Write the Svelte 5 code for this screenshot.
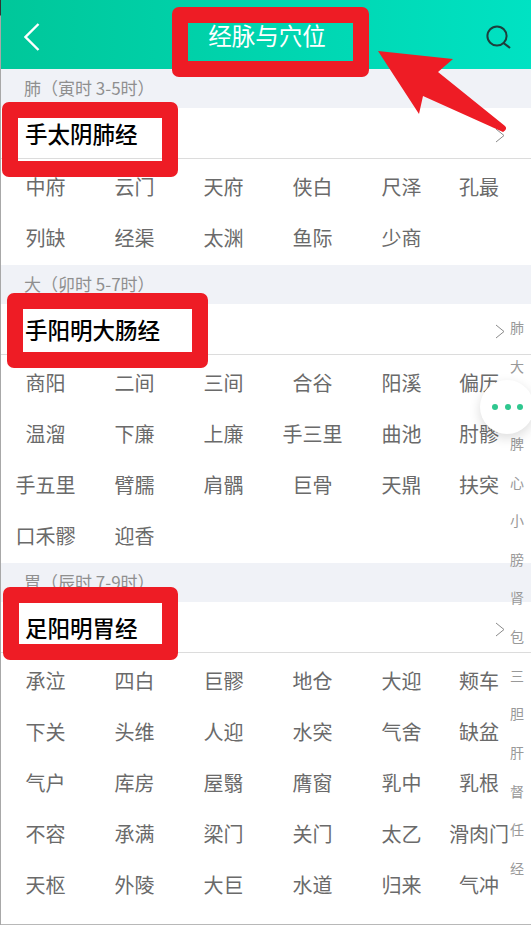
<script>
  const sections = [
    {
      label: "肺（寅时 3-5时）",
      title: "手太阴肺经",
      points: ["中府", "云门", "天府", "侠白", "尺泽", "孔最", "列缺", "经渠", "太渊", "鱼际", "少商"],
    },
    {
      label: "大（卯时 5-7时）",
      title: "手阳明大肠经",
      points: ["商阳", "二间", "三间", "合谷", "阳溪", "偏历", "温溜", "下廉", "上廉", "手三里", "曲池", "肘髎", "手五里", "臂臑", "肩髃", "巨骨", "天鼎", "扶突", "口禾髎", "迎香"],
    },
    {
      label: "胃（辰时 7-9时）",
      title: "足阳明胃经",
      points: ["承泣", "四白", "巨髎", "地仓", "大迎", "颊车", "下关", "头维", "人迎", "水突", "气舍", "缺盆", "气户", "库房", "屋翳", "膺窗", "乳中", "乳根", "不容", "承满", "梁门", "关门", "太乙", "滑肉门", "天枢", "外陵", "大巨", "水道", "归来", "气冲"],
    },
  ];
  const letters = ["肺", "大", "胃", "脾", "心", "小", "膀", "肾", "包", "三", "胆", "肝", "督", "任", "经"];
  // red markup boxes drawn on top of the screenshot
  const marks = ["one", "two", "three", "four"];
</script>

<div class="page">
  <header class="top">
    <svg class="back" width="16" height="28" viewBox="0 0 16 28">
      <path d="M14.5 1 L1.5 14 L14.5 27" fill="none" stroke="#fff" stroke-width="2.4" />
    </svg>
    <span class="heading">经脉与穴位</span>
    <svg class="search" width="26" height="24" viewBox="0 0 26 24">
      <circle cx="11" cy="11" r="9.6" fill="none" stroke="#1d3f3c" stroke-width="2" />
      <path d="M17.5 18 L24 23" fill="none" stroke="#1d3f3c" stroke-width="2.2" />
    </svg>
  </header>

  {#each sections as section}
    <section>
      <div class="label">{section.label}</div>
      <div class="row">
        <span class="title">{section.title}</span>
        <svg class="more" width="10" height="15" viewBox="0 0 10 15">
          <path d="M1 1 L9 7.500 L1 14" fill="none" stroke="#8a8a8a" stroke-width="1" />
        </svg>
      </div>
      <div class="points">
        {#each section.points as point}
          <span>{point}</span>
        {/each}
      </div>
    </section>
  {/each}

  <nav class="index">
    {#each letters as letter}
      <span>{letter}</span>
    {/each}
  </nav>

  <div class="ball"><i></i><i></i><i></i></div>

  {#each marks as mark}
    <div class="mark {mark}"></div>
  {/each}
  <svg class="arrow" width="140" height="95" viewBox="0 0 140 95">
    <path d="M0 1 L75 9 L60 22 L127 76 Q130 79 125 82 L45 46 L41 64 Z" fill="#ee1c25" />
  </svg>
  <div class="edge"></div>
</div>

<style>
  :global(body) {
    background: #fff;
  }
  .page {
    position: relative;
    width: 531px;
    height: 925px;
    overflow: hidden;
    background: #fff;
    font-family: "Noto Sans CJK SC", "Liberation Sans", sans-serif;
  }
  .edge {
    position: absolute;
    left: 0;
    top: 0;
    width: 1px;
    height: 925px;
    background: linear-gradient(#333 0, #333 15px, #a8a8a8 16px);
  }
  .top {
    height: 69px;
    display: flex;
    align-items: center;
    justify-content: space-between;
    padding: 0 19px 0 24px;
    background: linear-gradient(90deg, #00c79a, #00e2c3);
  }
  .back {
    margin-top: 4px;
  }
  .heading {
    color: #fff;
    font-size: 23.500px;
    font-weight: 400;
    margin-top: 0;
    margin-left: 8px;
  }
  .search {
    margin-top: 5px;
  }
  section:last-of-type {
    height: 362px;
    box-sizing: border-box;
    border-bottom: 1px solid #b8b8b8;
  }
  .label {
    height: 39px;
    padding-left: 24px;
    background: #f0f2f7;
    color: #8f8f8f;
    font-size: 17px;
    line-height: 38px;
    font-weight: 400;
  }
  .row {
    height: 50px;
    display: flex;
    align-items: center;
    justify-content: space-between;
    padding: 0 26px 0 25px;
    border-bottom: 1px solid #dcdcdc;
  }
  .title {
    color: #000;
    font-size: 22.500px;
    font-weight: 500;
    margin-top: -1px;
  }
  .more {
    margin-top: 5px;
  }
  .points {
    display: grid;
    grid-template-columns: repeat(5, 89px) 66px;
    grid-auto-rows: 51px;
    padding: 2px 0 2px 1px;
    color: #6a6a6a;
    font-size: 20px;
    font-weight: 400;
  }
  .points span {
    display: flex;
    align-items: center;
    justify-content: center;
    white-space: nowrap;
  }
  .index {
    position: absolute;
    top: 308px;
    right: 7px;
    display: flex;
    flex-direction: column;
    color: #999;
    font-size: 14px;
    font-weight: 400;
  }
  .index span {
    height: 38.650px;
    line-height: 38.650px;
  }
  .ball {
    position: absolute;
    left: 480px;
    top: 380px;
    width: 54px;
    height: 54px;
    border-radius: 50%;
    background: #fff;
    box-shadow: 0 4px 12px rgba(0, 0, 0, 0.14);
    display: flex;
    align-items: center;
    gap: 6.500px;
    padding-left: 12px;
    box-sizing: border-box;
  }
  .ball i {
    width: 6px;
    height: 6px;
    flex: none;
    border-radius: 50%;
    background: #2fc78f;
  }
  .mark {
    position: absolute;
    border: 16px solid #ee1c25;
    border-radius: 7px;
    box-sizing: border-box;
  }
  .one {
    left: 172px;
    top: 7px;
    width: 197px;
    height: 70px;
  }
  .two {
    left: 2px;
    top: 102px;
    width: 176px;
    height: 75px;
  }
  .three {
    left: 7px;
    top: 293px;
    width: 201px;
    height: 75px;
  }
  .four {
    left: 3px;
    top: 587px;
    width: 175px;
    height: 73px;
  }
  .arrow {
    position: absolute;
    left: 378px;
    top: 50px;
  }
</style>
